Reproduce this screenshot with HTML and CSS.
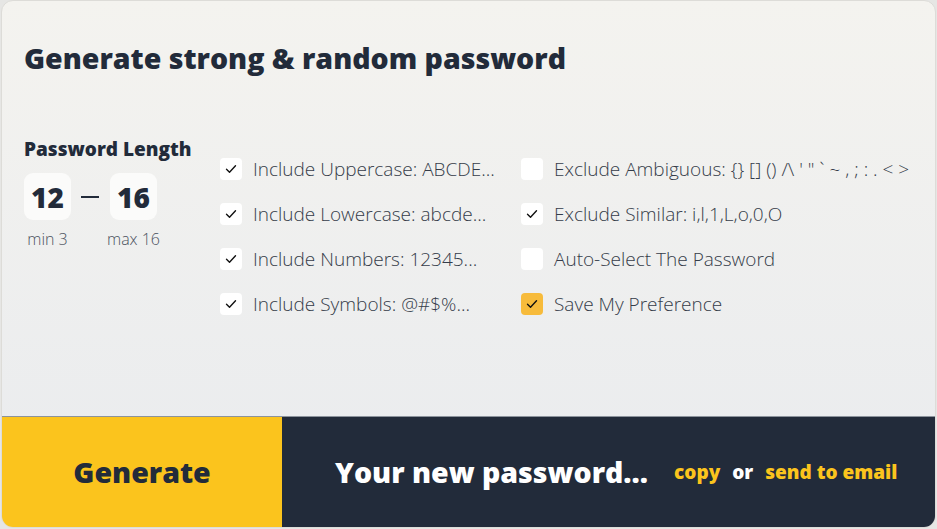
FILE: index.html
```html
<!DOCTYPE html>
<html lang="en">
<head>
<meta charset="utf-8">
<title>Password Generator</title>
<link rel="stylesheet" href="styles.css">
</head>
<body>
<div class="card">
  <div class="top">
    <h1 class="title">Generate strong &amp; random password</h1>
    <div class="options">
      <div class="length">
        <div class="length-label">Password Length</div>
        <div class="length-row">
          <div class="len-col">
            <div class="num-box">12</div>
            <div class="num-note">min 3</div>
          </div>
          <div class="dash"></div>
          <div class="len-col">
            <div class="num-box">16</div>
            <div class="num-note">max 16</div>
          </div>
        </div>
      </div>
      <div class="checks col-a">
        <label class="check"><span class="box on"><svg viewBox="0 0 22 22"><path d="M6.5 11.2l3 3 6-6.4"/></svg></span>Include Uppercase: ABCDE...</label>
        <label class="check"><span class="box on"><svg viewBox="0 0 22 22"><path d="M6.5 11.2l3 3 6-6.4"/></svg></span>Include Lowercase: abcde...</label>
        <label class="check"><span class="box on"><svg viewBox="0 0 22 22"><path d="M6.5 11.2l3 3 6-6.4"/></svg></span>Include Numbers: 12345...</label>
        <label class="check"><span class="box on"><svg viewBox="0 0 22 22"><path d="M6.5 11.2l3 3 6-6.4"/></svg></span>Include Symbols: @#$%...</label>
      </div>
      <div class="checks col-b">
        <label class="check"><span class="box"></span>Exclude Ambiguous: {} [] () /\ ' " ` ~ , ; : . &lt; &gt;</label>
        <label class="check"><span class="box on"><svg viewBox="0 0 22 22"><path d="M6.5 11.2l3 3 6-6.4"/></svg></span>Exclude Similar: i,l,1,L,o,0,O</label>
        <label class="check"><span class="box"></span>Auto-Select The Password</label>
        <label class="check"><span class="box yellow"><svg viewBox="0 0 22 22"><path d="M6.5 11.2l3 3 6-6.4"/></svg></span>Save My Preference</label>
      </div>
    </div>
  </div>
  <div class="bottom">
    <button class="generate">Generate</button>
    <div class="result">
      <span class="pw">Your new password...</span>
      <span class="link">copy</span>
      <span class="or">or</span>
      <span class="link">send to email</span>
    </div>
  </div>
</div>
</body>
</html>
```

FILE: styles.css
```css
html, body {
  margin: 0;
  padding: 0;
  height: 100%;
}
body {
  background: #e6e6e4;
  font-family: "Open Sans", "Noto Sans", sans-serif;
  color: #222b3a;
}
.card {
  box-sizing: border-box;
  margin: 0 1px;
  height: 528px;
  border: 1px solid #dddcd8;
  border-radius: 12px;
  overflow: hidden;
  display: flex;
  flex-direction: column;
  background: linear-gradient(180deg, #f4f3ef 0%, #e9ebee 100%);
}
.top {
  flex: 1;
  padding: 38px 22px 0;
}
.title {
  margin: 0;
  font-size: 28.5px;
  line-height: 38px;
  font-weight: 800;
  color: #222b3a;
}
.options {
  display: flex;
  align-items: flex-start;
  margin-top: 60px;
}
.length {
  width: 196px;
  flex: none;
}
.length-label {
  font-size: 19px;
  line-height: 24px;
  font-weight: 800;
}
.length-row {
  display: flex;
  align-items: flex-start;
  margin-top: 12px;
}
.len-col {
  width: 47px;
  display: flex;
  flex-direction: column;
  align-items: center;
}
.num-box {
  width: 47px;
  height: 47px;
  border-radius: 9px;
  background: #fbfbfa;
  display: flex;
  align-items: center;
  justify-content: center;
  font-size: 28px;
  font-weight: 800;
}
.num-note {
  margin-top: 9px;
  font-size: 16px;
  line-height: 20px;
  font-weight: 300;
  color: #4b5260;
  white-space: nowrap;
}
.dash {
  width: 18px;
  height: 2px;
  background: #222b3a;
  margin: 23px 11px 0 10px;
}
.checks {
  display: flex;
  flex-direction: column;
  margin-top: 9px;
}
.col-a {
  width: 301px;
  flex: none;
}
.check {
  display: flex;
  align-items: center;
  height: 45px;
  font-size: 19px;
  font-weight: 300;
  color: #353c49;
  white-space: nowrap;
}
.box {
  width: 22px;
  height: 22px;
  border-radius: 4px;
  background: #ffffff;
  margin-right: 11px;
  flex: none;
  display: flex;
}
.box svg {
  width: 22px;
  height: 22px;
  fill: none;
  stroke: #111;
  stroke-width: 1.4;
  stroke-linecap: round;
  stroke-linejoin: round;
}
.box.yellow {
  background: #f7bb3b;
}
.bottom {
  height: 110px;
  flex: none;
  display: flex;
  border-top: 1px solid #8c939c;
}
.generate {
  width: 280px;
  flex: none;
  border: none;
  margin: 0;
  padding: 0;
  background: #fbc41d;
  color: #222b3a;
  font-family: "Open Sans", "Noto Sans", sans-serif;
  font-size: 28.5px;
  font-weight: 800;
}
.result {
  flex: 1;
  background: #222b3a;
  display: flex;
  align-items: center;
  padding-left: 53px;
}
.pw {
  color: #ffffff;
  font-size: 28.5px;
  font-weight: 800;
  margin-right: 26px;
}
.link {
  color: #fbc41d;
  font-size: 19px;
  font-weight: 800;
}
.or {
  color: #ffffff;
  font-size: 19px;
  font-weight: 800;
  margin: 0 12px;
}
```
